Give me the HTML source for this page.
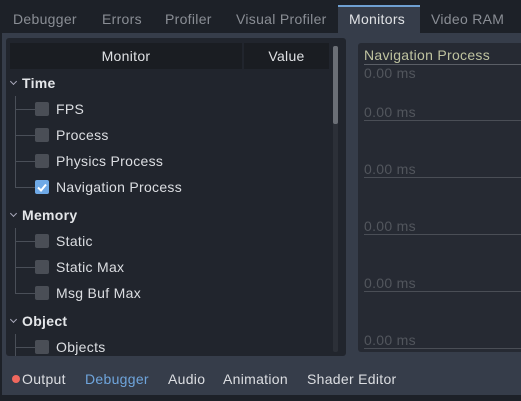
<!DOCTYPE html>
<html><head><meta charset="utf-8"><style>
*{margin:0;padding:0;box-sizing:border-box}
body{width:521px;height:401px;overflow:hidden;background:#1d2128;font-family:"Liberation Sans","DejaVu Sans",sans-serif;font-size:14px;position:relative;letter-spacing:0.3px}
.a{position:absolute;white-space:nowrap}
.tab{position:absolute;top:5px;height:28px;line-height:28px;color:#8a8e95;font-size:14px}
.panel{position:absolute;left:2px;top:33px;width:519px;height:362px;background:#363d4a}
.tree{position:absolute;left:6px;top:38px;width:340px;height:318px;background:#21252d;border-radius:3px}
.hdr{position:absolute;top:43px;height:26px;line-height:26px;background:#1a1d22;color:#dfe1e4;text-align:center}
.cb{position:absolute;left:35px;width:14px;height:14px;background:#4a4e56;border-radius:2px}
.lbl{position:absolute;left:56px;color:#dcdee2;line-height:18px}
.grp{position:absolute;left:22px;color:#e4e6e9;font-weight:bold;line-height:18px}
.car{position:absolute;left:11px;width:5px;height:5px;border-right:1.5px solid #aab;border-bottom:1.5px solid #aab;transform:rotate(45deg)}
.vl{position:absolute;left:15px;width:1px;background:#4a4f58}
.hl{position:absolute;left:15px;width:20px;height:1px;background:#4a4f58}
.gv{position:absolute;left:364px;color:#52565d;font-size:14px}
.gl{position:absolute;left:364px;width:157px;height:1px;background:#4a4e56}
.bt{position:absolute;top:370px;line-height:18px;color:#dcdee2}
</style></head><body>
<div class="tab" style="left:13px">Debugger</div>
<div class="tab" style="left:102px">Errors</div>
<div class="tab" style="left:165px">Profiler</div>
<div class="tab" style="left:236px">Visual Profiler</div>
<div class="a" style="left:338px;top:5px;width:82px;height:28px;background:#363d4a;border-top:2px solid #6fa0d2"></div>
<div class="tab" style="left:349px;color:#e0e2e5">Monitors</div>
<div class="tab" style="left:431px">Video RAM</div>
<div class="panel"></div>
<div class="tree"></div>
<div class="hdr" style="left:10px;width:232px">Monitor</div>
<div class="hdr" style="left:244px;width:85px">Value</div>
<div class="a" style="left:333px;top:46px;width:5px;height:306px;background:#2c3038;border-radius:2px"></div>
<div class="a" style="left:333px;top:46px;width:5px;height:78px;background:#6b6f76;border-radius:2px"></div>

<div class="car" style="top:79px"></div><div class="grp" style="top:74px">Time</div>
<div class="vl" style="top:96px;height:92px"></div>
<div class="hl" style="top:109px"></div><div class="cb" style="top:102px"></div><div class="lbl" style="top:100px">FPS</div>
<div class="hl" style="top:135px"></div><div class="cb" style="top:128px"></div><div class="lbl" style="top:126px">Process</div>
<div class="hl" style="top:161px"></div><div class="cb" style="top:154px"></div><div class="lbl" style="top:152px">Physics Process</div>
<div class="hl" style="top:187px"></div><div class="cb" style="top:180px;background:#6fa9e6"></div>
<svg class="a" style="left:35px;top:180px" width="14" height="14"><path d="M3 7.5l3 3 5-6" stroke="#fff" stroke-width="2" fill="none"/></svg>
<div class="lbl" style="top:178px">Navigation Process</div>

<div class="car" style="top:211px"></div><div class="grp" style="top:206px">Memory</div>
<div class="vl" style="top:228px;height:66px"></div>
<div class="hl" style="top:241px"></div><div class="cb" style="top:234px"></div><div class="lbl" style="top:232px">Static</div>
<div class="hl" style="top:267px"></div><div class="cb" style="top:260px"></div><div class="lbl" style="top:258px">Static Max</div>
<div class="hl" style="top:293px"></div><div class="cb" style="top:286px"></div><div class="lbl" style="top:284px">Msg Buf Max</div>

<div class="car" style="top:317px"></div><div class="grp" style="top:312px">Object</div>
<div class="vl" style="top:334px;height:22px"></div>
<div class="hl" style="top:347px"></div><div class="cb" style="top:340px"></div><div class="lbl" style="top:338px">Objects</div>

<div class="a" style="left:358px;top:43px;width:163px;height:309px;background:#262a33;border-radius:3px 0 0 3px"></div>
<div class="a" style="left:364px;top:47px;color:#bfc3a0;font-size:14px">Navigation Process</div>
<div class="gl" style="top:64px;background:#5a5e66"></div>
<div class="gv" style="top:65px">0.00 ms</div>
<div class="gv" style="top:104px">0.00 ms</div><div class="gl" style="top:120px"></div>
<div class="gv" style="top:161px">0.00 ms</div><div class="gl" style="top:177px"></div>
<div class="gv" style="top:218px">0.00 ms</div><div class="gl" style="top:234px"></div>
<div class="gv" style="top:275px">0.00 ms</div><div class="gl" style="top:291px"></div>
<div class="gv" style="top:332px">0.00 ms</div><div class="gl" style="top:348px"></div>

<div class="a" style="left:12px;top:375px;width:8px;height:8px;border-radius:50%;background:#f0685e"></div>
<div class="bt" style="left:22px">Output</div>
<div class="bt" style="left:85px;color:#6fa5dc">Debugger</div>
<div class="bt" style="left:168px">Audio</div>
<div class="bt" style="left:223px">Animation</div>
<div class="bt" style="left:307px">Shader Editor</div>
</body></html>
